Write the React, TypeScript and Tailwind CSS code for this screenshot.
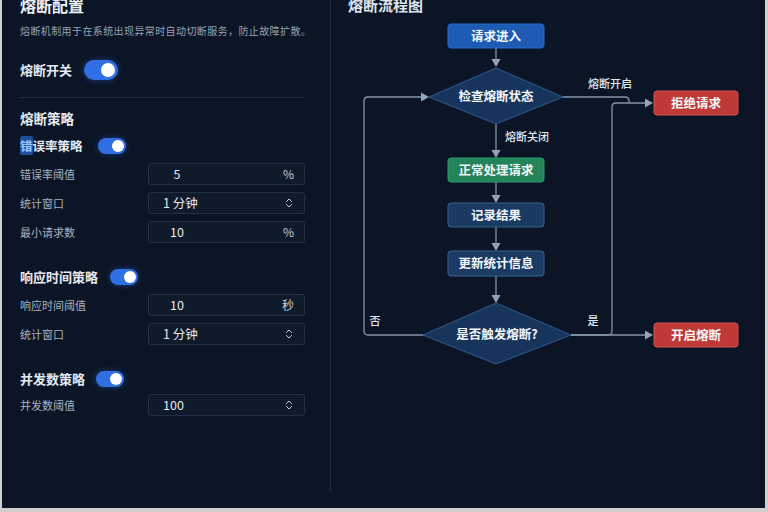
import { ChevronsUpDown } from "lucide-react"

const font = { fontFamily: '"Noto Sans CJK SC", "Noto Sans", sans-serif' }

function Toggle({ big = false }: { big?: boolean }) {
  return big ? (
    <div className="flex h-[20px] w-[34px] items-center justify-end rounded-full bg-[#2f6fe3] pr-[3px] shadow-[0_0_6px_rgba(47,111,227,0.45)]">
      <div className="size-[14px] rounded-full bg-white" />
    </div>
  ) : (
    <div className="flex h-[16px] w-[28px] items-center justify-end rounded-full bg-[#2f6fe3] pr-[2px] shadow-[0_0_6px_rgba(47,111,227,0.45)]">
      <div className="size-[12px] rounded-full bg-white" />
    </div>
  )
}

function Field({
  label,
  value,
  unit,
  select = false,
  className = "",
}: {
  label: string
  value: string
  unit?: string
  select?: boolean
  className?: string
}) {
  return (
    <div className={`flex items-center ${className}`}>
      <div className="w-[128px] text-[11px] text-[#a9b3c2]">{label}</div>
      <div className="flex h-[22px] flex-1 items-center rounded-[3px] border border-[#233044] bg-[#0f1a2b]">
        {select ? (
          <span className="flex-1 pl-[14px] text-[12.5px] text-[#e6eaf0]">{value}</span>
        ) : (
          <span className="w-[56px] text-center text-[12.5px] text-[#e6eaf0]">{value}</span>
        )}
        {!select && <span className="flex-1" />}
        {unit ? (
          <span className="pr-[10px] text-[12px] text-[#c9d0da]">{unit}</span>
        ) : (
          <ChevronsUpDown className="mr-[9px] size-[12px] text-[#c9d0da]" strokeWidth={2} />
        )}
      </div>
    </div>
  )
}

function Arrow({ d, tip }: { d: string; tip?: [number, number, "down" | "right"] }) {
  return (
    <g>
      <path d={d} fill="none" stroke="#8494aa" strokeWidth={1.3} />
      {tip &&
        (tip[2] === "down" ? (
          <polygon
            points={`${tip[0] - 4.5},${tip[1] - 8} ${tip[0] + 4.5},${tip[1] - 8} ${tip[0]},${tip[1]}`}
            fill="#93a3ba"
          />
        ) : (
          <polygon
            points={`${tip[0] - 8},${tip[1] - 4.5} ${tip[0] - 8},${tip[1] + 4.5} ${tip[0]},${tip[1]}`}
            fill="#93a3ba"
          />
        ))}
    </g>
  )
}

function Box({
  x,
  y,
  w,
  h,
  fill,
  stroke,
  label,
}: {
  x: number
  y: number
  w: number
  h: number
  fill: string
  stroke: string
  label: string
}) {
  return (
    <g>
      <rect x={x} y={y} width={w} height={h} rx={3} fill={fill} stroke={stroke} strokeWidth={1} />
      <text
        x={x + w / 2}
        y={y + h / 2 + 4.5}
        textAnchor="middle"
        fontSize={12.5}
        fontWeight={600}
        fill="#f3f6fa"
      >
        {label}
      </text>
    </g>
  )
}

function FlowChart() {
  return (
    <svg
      className="absolute inset-0"
      width={434}
      height={508}
      viewBox="331 0 434 508"
      style={font}
    >
      {/* main column arrows */}
      <Arrow d="M496 48 V64" tip={[496, 67, "down"]} />
      <Arrow d="M496 124 V154" tip={[496, 158, "down"]} />
      <Arrow d="M496 182 V199" tip={[496, 203, "down"]} />
      <Arrow d="M496 227 V247" tip={[496, 251, "down"]} />
      <Arrow d="M496 276 V299" tip={[496, 303, "down"]} />

      {/* 否 loop back */}
      <Arrow d="M423 335 H368 Q364 335 364 331 V101 Q364 97 368 97 H424" tip={[429, 97, "right"]} />
      {/* 熔断开启 */}
      <Arrow d="M563 97 H625 Q629 97 629 101 V103" />
      {/* 是 up to 拒绝请求 */}
      <Arrow d="M571 335 H608 Q612 335 612 331 V107 Q612 103 616 103 H648" tip={[653, 103, "right"]} />
      {/* 是 to 开启熔断 */}
      <Arrow d="M571 335 H648" tip={[653, 335, "right"]} />

      <Box x={448} y={24} w={96} h={24} fill="#1d5bb4" stroke="#2a6bc8" label="请求进入" />

      <polygon points="496,68 563,97 496,124 429,97" fill="#17355c" stroke="#2f5a8c" strokeWidth={1} />
      <text x={496} y={101} textAnchor="middle" fontSize={12.5} fontWeight={600} fill="#f3f6fa">
        检查熔断状态
      </text>

      <Box x={448} y={158} w={96} h={24} fill="#23845a" stroke="#2f9a6a" label="正常处理请求" />
      <Box x={448} y={203} w={96} h={24} fill="#1a3a63" stroke="#3a6192" label="记录结果" />
      <Box x={448} y={251} w={96} h={25} fill="#1a3a63" stroke="#3a6192" label="更新统计信息" />

      <polygon points="496,303 571,335 496,364 423,335" fill="#17355c" stroke="#2f5a8c" strokeWidth={1} />
      <text x={497} y={339} textAnchor="middle" fontSize={12.5} fontWeight={600} fill="#f3f6fa">
        是否触发熔断?
      </text>

      <Box x={654} y={91} w={84} h={24} fill="#bf3a36" stroke="#d4524d" label="拒绝请求" />
      <Box x={654} y={323} w={84} h={24} fill="#bf3a36" stroke="#d4524d" label="开启熔断" />

      <text x={610} y={88} textAnchor="middle" fontSize={11} fontWeight={500} fill="#e3e8ef">
        熔断开启
      </text>
      <text x={505} y={141} fontSize={11} fontWeight={500} fill="#e3e8ef">
        熔断关闭
      </text>
      <text x={375} y={325} textAnchor="middle" fontSize={11} fontWeight={500} fill="#e3e8ef">
        否
      </text>
      <text x={593} y={325} textAnchor="middle" fontSize={11} fontWeight={500} fill="#e3e8ef">
        是
      </text>
    </svg>
  )
}

export default function App() {
  return (
    <div className="h-[512px] w-[768px] overflow-hidden bg-[#cfcfcf]" style={font}>
      <div className="ml-[2px] flex h-[508px] w-[763px] overflow-hidden bg-[#0b1526]">
        {/* left: config */}
        <div className="flex w-[328px] flex-col pl-[18px] pr-[25px]">
          <div className="-mt-[6px] text-[16px] font-bold leading-[22px] text-[#eef2f7]">熔断配置</div>
          <div className="mt-[7px] whitespace-nowrap text-[10px] leading-[16px] tracking-[0.4px] text-[#98a3b3]">
            熔断机制用于在系统出现异常时自动切断服务，防止故障扩散。
          </div>

          <div className="mt-[21px] flex h-[20px] items-center gap-3">
            <span className="text-[13px] font-semibold text-[#e6ebf2]">熔断开关</span>
            <Toggle big />
          </div>

          <div className="mt-[17px] h-px bg-[#1f2b3d]" />

          <div className="mt-[10px] text-[13.5px] font-bold leading-[20px] text-[#e6ebf2]">熔断策略</div>

          <div className="mt-[10px] flex h-[16px] items-center gap-[15px]">
            <span className="text-[12.5px] font-semibold text-[#e6ebf2]">
              <span className="rounded-[2px] bg-[#1e4f9a] text-[#9cc4ff]">错</span>误率策略
            </span>
            <Toggle />
          </div>

          <Field className="mt-[9px]" label="错误率阈值" value="5" unit="%" />
          <Field className="mt-[7px]" label="统计窗口" value="1 分钟" select />
          <Field className="mt-[7px]" label="最小请求数" value="10" unit="%" />

          <div className="mt-[26px] flex h-[16px] items-center gap-[12px]">
            <span className="text-[13px] font-bold text-[#e6ebf2]">响应时间策略</span>
            <Toggle />
          </div>

          <Field className="mt-[9px]" label="响应时间阈值" value="10" unit="秒" />
          <Field className="mt-[7px]" label="统计窗口" value="1 分钟" select />

          <div className="mt-[26px] flex h-[16px] items-center gap-[11px]">
            <span className="text-[13px] font-bold text-[#e6ebf2]">并发数策略</span>
            <Toggle />
          </div>

          <Field className="mt-[7px]" label="并发数阈值" value="100" select />
        </div>

        <div className="h-[492px] w-px bg-[#1f2b3d]" />

        {/* right: flow chart */}
        <div className="relative flex-1 pl-[17px]">
          <div className="relative z-10 -mt-[6px] text-[15px] font-semibold leading-[22px] text-[#dfe5ee]">
            熔断流程图
          </div>
          <FlowChart />
        </div>
      </div>
    </div>
  )
}
